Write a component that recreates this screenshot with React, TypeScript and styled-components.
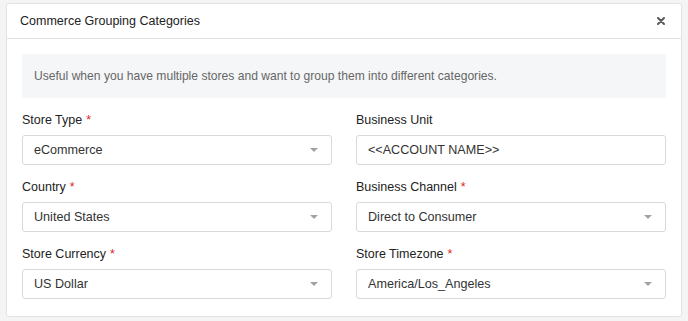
import React from "react";
import styled, { createGlobalStyle } from "styled-components";

const GlobalStyle = createGlobalStyle`
  body {
    margin: 0;
    background: #f4f4f5;
    font-family: "Liberation Sans", Arial, sans-serif;
    color: #333;
  }
`;

type Field = {
  label: string;
  value: string;
  required?: boolean;
  select?: boolean;
};

const fields: Field[] = [
  { label: "Store Type", value: "eCommerce", required: true, select: true },
  { label: "Business Unit", value: "<<ACCOUNT NAME>>" },
  { label: "Country", value: "United States", required: true, select: true },
  { label: "Business Channel", value: "Direct to Consumer", required: true, select: true },
  { label: "Store Currency", value: "US Dollar", required: true, select: true },
  { label: "Store Timezone", value: "America/Los_Angeles", required: true, select: true },
];

const Caret = () => (
  <svg width="8" height="4" viewBox="0 0 8 4">
    <path d="M0 0h8L4 4z" fill="#a3a3a3" />
  </svg>
);

const CloseIcon = () => (
  <svg width="8" height="8" viewBox="0 0 8 8">
    <path d="M1 1l6 6M7 1L1 7" stroke="#5a5a5a" strokeWidth="2" strokeLinecap="round" />
  </svg>
);

export default function App() {
  return (
    <>
      <GlobalStyle />
      <Card>
        <Header>
          <Title>Commerce Grouping Categories</Title>
          <Close aria-label="close">
            <CloseIcon />
          </Close>
        </Header>
        <Body>
          <Info>Useful when you have multiple stores and want to group them into different categories.</Info>
          <FormGrid>
            {fields.map((f) => (
              <FieldControl key={f.label}>
                <Label>
                  {f.label}
                  {f.required && <Star>*</Star>}
                </Label>
                <Box>
                  <span>{f.value}</span>
                  {f.select && <Caret />}
                </Box>
              </FieldControl>
            ))}
          </FormGrid>
        </Body>
      </Card>
    </>
  );
}

const Card = styled.div`
  margin: 3px 6px 0;
  width: 676px;
  box-sizing: border-box;
  background: #fff;
  border: 1px solid #e3e3e5;
  border-radius: 3px;
`;

const Header = styled.div`
  height: 34px;
  display: flex;
  align-items: center;
  justify-content: space-between;
  padding: 0 16px 0 13px;
  border-bottom: 1px solid #e3e3e5;
`;

const Title = styled.div`
  font-size: 12.5px;
  color: #222;
`;

const Close = styled.span`
  display: flex;
  align-items: center;
`;

const Body = styled.div`
  padding: 15px 15px 17px;
`;

const Info = styled.div`
  height: 44px;
  display: flex;
  align-items: center;
  padding: 0 12px;
  background: #f5f6f8;
  border-radius: 2px;
  font-size: 12.1px;
  color: #666;
`;

const FormGrid = styled.div`
  margin-top: 13px;
  display: grid;
  grid-template-columns: 1fr 1fr;
  column-gap: 24px;
  row-gap: 13px;
`;

const FieldControl = styled.div`
  display: flex;
  flex-direction: column;
`;

const Label = styled.div`
  height: 18px;
  line-height: 18px;
  font-size: 12.5px;
  color: #222;
  margin-bottom: 6px;
`;

const Star = styled.span`
  color: #e02424;
  margin-left: 4px;
`;

const Box = styled.div`
  height: 30px;
  box-sizing: border-box;
  border: 1px solid #d9d9db;
  border-radius: 3px;
  display: flex;
  align-items: center;
  justify-content: space-between;
  padding: 0 13px 0 11px;
  font-size: 12.6px;
  color: #333;
`;
